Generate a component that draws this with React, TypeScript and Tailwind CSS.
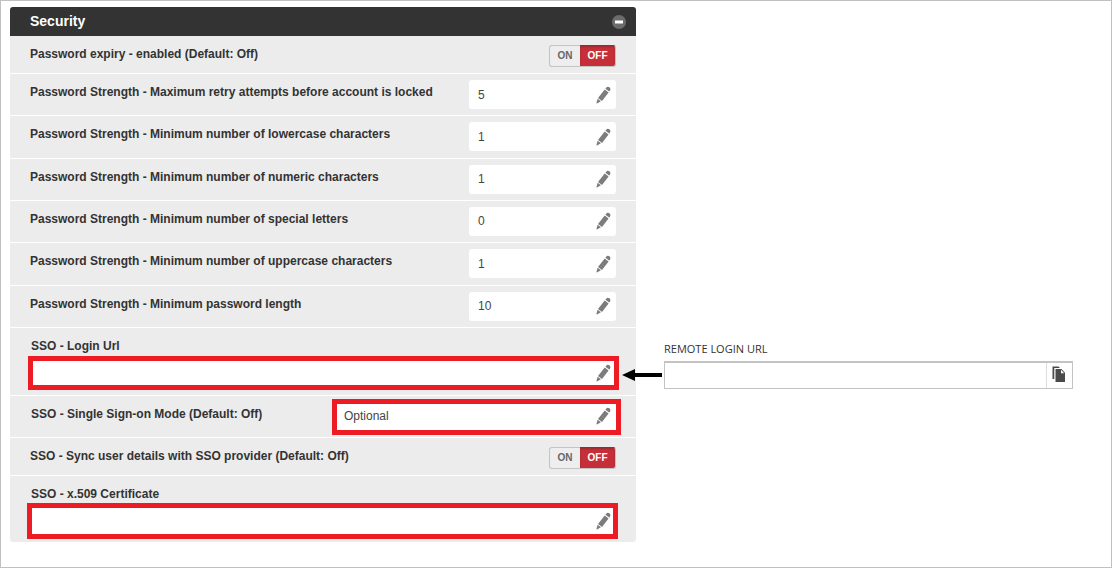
import React, { useState } from 'react';

interface ToggleProps {
    label: string;
}

interface FieldProps {
    id: string;
    label: string;
    value: string;
}

const PencilIcon: React.FC = () => (
    <svg width="15" height="18" viewBox="0 0 15 18" fill="#7c7c7c" aria-hidden="true">
        <path d="M10 2 C10.8 0.7 12.2 0.4 13.4 1.3 C14.6 2.2 14.7 3.6 13.9 4.7 L13.2 5.5 L9.4 2.7 Z" />
        <path d="M8.7 3.5 L12.6 6.4 L6 14.9 L2 11.9 Z" />
        <path d="M1.6 12.7 L4.9 15.2 L1 17.4 Q0.4 17.5 0.5 16.8 Z" />
    </svg>
);

const CopyIcon: React.FC = () => (
    <svg width="14" height="17" viewBox="0 0 14 17" aria-hidden="true">
        <path d="M0.5 0.5 H6.5 L8 2 H2.3 V13 H0.5 Z" fill="#4a4a4a" />
        <path d="M3.5 3 H9.5 L13 6.8 V16 H3.5 Z" fill="#4a4a4a" />
        <path d="M9 3.8 V7.2 H12.2 Z" fill="#fff" />
    </svg>
);

const EditButton: React.FC<{ label: string }> = ({ label }) => (
    <button type="button" aria-label={`Edit ${label}`} className="shrink-0">
        <PencilIcon />
    </button>
);

const labelClass = 'pt-[9px] text-[12px] leading-[18px] font-bold text-[#333]';
const inputClass = 'w-full min-w-0 flex-1 bg-transparent text-[12px] text-[#444] outline-none';

// On / off switch row
const ToggleRow: React.FC<ToggleProps> = ({ label }) => {
    const [on, setOn] = useState(false);
    const active = 'bg-[#c62f38] text-white border-[#c4c4c4] border-t-[#982a31] shadow-[inset_0_1px_2px_#982a31]';
    const idle = 'bg-[#eee] text-[#666] border-[#c4c4c4]';

    return (
        <div className="flex items-start justify-between border-b border-white pb-[6px] pl-5 pr-5">
            <span className={labelClass}>{label}</span>
            <div role="group" aria-label={label} className="mt-[9px] flex h-[22px] text-[10px] font-bold">
                <button
                    type="button"
                    aria-pressed={on}
                    onClick={() => setOn(true)}
                    className={`w-[31px] rounded-l-[3px] border border-r-0 pb-px ${on ? active : idle}`}
                >
                    ON
                </button>
                <button
                    type="button"
                    aria-pressed={!on}
                    onClick={() => setOn(false)}
                    className={`w-9 rounded-r-[3px] border border-l-0 pb-px ${on ? idle : active}`}
                >
                    OFF
                </button>
            </div>
        </div>
    );
};

const FieldRow: React.FC<FieldProps> = ({ id, label, value }) => (
    <div className="flex items-start justify-between border-b border-white pl-5 pr-5">
        <label htmlFor={id} className={labelClass}>{label}</label>
        <div className="mt-[6px] flex h-[29px] w-[147px] items-center rounded-[3px] bg-white pl-[9px] pr-[5px]">
            <input id={id} defaultValue={value} className={inputClass} />
            <EditButton label={label} />
        </div>
    </div>
);

const strengthFields: FieldProps[] = [
    { id: 'max-retry', label: 'Password Strength - Maximum retry attempts before account is locked', value: '5' },
    { id: 'min-lower', label: 'Password Strength - Minimum number of lowercase characters', value: '1' },
    { id: 'min-numeric', label: 'Password Strength - Minimum number of numeric characters', value: '1' },
    { id: 'min-special', label: 'Password Strength - Minimum number of special letters', value: '0' },
    { id: 'min-upper', label: 'Password Strength - Minimum number of uppercase characters', value: '1' },
    { id: 'min-length', label: 'Password Strength - Minimum password length', value: '10' },
];

const SecurityPanel: React.FC = () => (
    <section className="overflow-hidden rounded-[3px] bg-[#ececec]">
        <header className="flex h-[29px] items-center justify-between bg-[#333] pl-5 pr-[10px]">
            <h2 className="text-[14px] font-bold text-white">Security</h2>
            <button type="button" aria-label="Collapse Security">
                <svg width="14" height="14" viewBox="0 0 14 14" aria-hidden="true">
                    <circle cx="7" cy="7" r="7" fill="#6b6b6b" />
                    <rect x="3" y="5.5" width="8" height="3" fill="#fff" />
                </svg>
            </button>
        </header>

        <ToggleRow label="Password expiry - enabled (Default: Off)" />

        <div className="grid min-h-[254px] auto-rows-fr">
            {strengthFields.map((field) => (
                <FieldRow key={field.id} {...field} />
            ))}
        </div>

        <div className="border-b border-white pb-[5px] pl-[18px] pr-[17px]">
            <label htmlFor="login-url" className={`block pl-[3px] ${labelClass}`}>SSO - Login Url</label>
            <div className="mt-px flex h-[34px] items-center border-[5px] border-[#ed1c24] bg-white pl-[7px] pr-[3px]">
                <input id="login-url" className={inputClass} />
                <EditButton label="SSO - Login Url" />
            </div>
        </div>

        <div className="flex items-start justify-between border-b border-white pb-[2px] pl-[21px] pr-[15px]">
            <label htmlFor="sso-mode" className={labelClass}>SSO - Single Sign-on Mode (Default: Off)</label>
            <div className="mt-[3px] flex h-9 w-[289px] items-center border-[5px] border-[#ed1c24] bg-white pb-[2px] pl-[7px] pr-[5px]">
                <input id="sso-mode" defaultValue="Optional" className={inputClass} />
                <EditButton label="SSO - Single Sign-on Mode" />
            </div>
        </div>

        <ToggleRow label="SSO - Sync user details with SSO provider (Default: Off)" />

        <div className="pb-[3px] pl-[17px] pr-[18px]">
            <label htmlFor="certificate" className={`block pl-1 ${labelClass}`}>SSO - x.509 Certificate</label>
            <div className="flex h-9 items-center border-[5px] border-[#ed1c24] bg-white pl-[7px] pr-[2px]">
                <input id="certificate" className={inputClass} />
                <EditButton label="SSO - x.509 Certificate" />
            </div>
        </div>
    </section>
);

const RemoteLogin: React.FC = () => (
    <section className="pt-[333px]">
        <label htmlFor="remote-url" className="block font-['Open_Sans','Noto_Sans',sans-serif] text-[11px] leading-[18px] text-[#333]">
            REMOTE LOGIN URL
        </label>
        <div className="relative mt-[3px] flex h-7 border border-t-2 border-[#c3c3c3] bg-white">
            {/* Arrow pointing at the SSO login field */}
            <svg className="absolute right-full top-[6px] mr-[3px]" width="40" height="12" viewBox="0 0 40 12" aria-hidden="true">
                <path d="M0 6 L13 0 V4 H40 V8 H13 V12 Z" fill="#000" />
            </svg>
            <input id="remote-url" className="w-full min-w-0 flex-1 px-2 text-[12px] outline-none" />
            <button
                type="button"
                aria-label="Copy remote login URL"
                className="flex w-[26px] items-center border-l border-[#ddd] pb-[2px] pl-[5px]"
            >
                <CopyIcon />
            </button>
        </div>
    </section>
);

const App: React.FC = () => {
    return (
        <main className="grid min-h-screen grid-cols-[626fr_409fr] items-start gap-7 border border-[#c0c0c0] bg-white pb-6 pl-[9px] pr-[38px] pt-[6px] font-['Liberation_Sans',Arial,sans-serif]">
            <SecurityPanel />
            <RemoteLogin />
        </main>
    );
};

export default App;
